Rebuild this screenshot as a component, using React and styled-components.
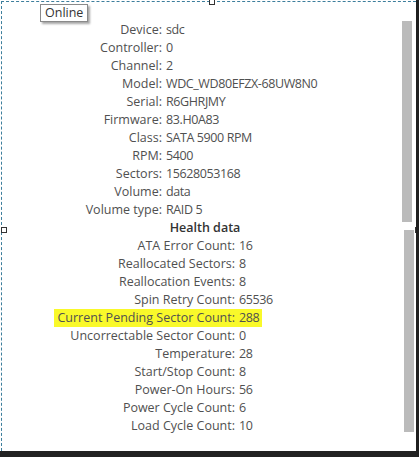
import React from "react";
import styled, { createGlobalStyle } from "styled-components";

const GlobalStyle = createGlobalStyle`
  html, body {
    margin: 0;
    padding: 0;
    background: #ffffff;
  }
  body {
    font-family: "Open Sans", "Noto Sans", sans-serif;
  }
`;

const device = [
  ["Device", "sdc"],
  ["Controller", "0"],
  ["Channel", "2"],
  ["Model", "WDC_WD80EFZX-68UW8N0"],
  ["Serial", "R6GHRJMY"],
  ["Firmware", "83.H0A83"],
  ["Class", "SATA 5900 RPM"],
  ["RPM", "5400"],
  ["Sectors", "15628053168"],
  ["Volume", "data"],
  ["Volume type", "RAID 5"],
];

const health = [
  ["ATA Error Count", "16"],
  ["Reallocated Sectors", "8"],
  ["Reallocation Events", "8"],
  ["Spin Retry Count", "65536"],
  ["Current Pending Sector Count", "288", true],
  ["Uncorrectable Sector Count", "0"],
  ["Temperature", "28"],
  ["Start/Stop Count", "8"],
  ["Power-On Hours", "56"],
  ["Power Cycle Count", "6"],
  ["Load Cycle Count", "10"],
];

export default function App() {
  return (
    <>
      <GlobalStyle />
      <Window>
        <Canvas>
          <Content>
            <Table $labelWidth={164}>
              {device.map(([k, v]) => (
                <Row key={k} label={k} value={v} />
              ))}
            </Table>
            <Heading>Health data</Heading>
            <Table $labelWidth={237}>
              {health.map(([k, v, hl]) => (
                <Row key={k} label={k} value={v} highlight={hl} />
              ))}
            </Table>
          </Content>
          <Scrollbar>
            <Thumb $shift={0} $height={201} />
            <Thumb $shift={2} $height={202} $gap={8} />
          </Scrollbar>
          <Tooltip>Online</Tooltip>
          <Handle $x={-1} $y={225} />
          <Handle $x={413} $y={225} />
          <Handle $x={207} $y={-3} />
        </Canvas>
      </Window>
    </>
  );
}

const Row = ({ label, value, highlight }) => (
  <>
    <Label>
      <Mark $hl={highlight} $side="label">
        {label}:
      </Mark>
    </Label>
    <Value>
      <Mark $hl={highlight} $side="value" $tight>
        {value}
      </Mark>
    </Value>
  </>
);

const Window = styled.div`
  width: 419px;
  height: 457px;
  box-sizing: border-box;
  padding: 1px 0 0 1px;
  border-right: 3px solid #1f1f1f;
  border-bottom: 6px solid #222222;
  background: #ffffff;
  overflow: hidden;
`;

const Canvas = styled.div`
  position: relative;
  display: flex;
  height: 100%;
  box-sizing: border-box;
  border-left: 1px dashed #3d7e9c;
  border-top: 1px dashed #3d7e9c;
`;

const Content = styled.div`
  flex: 1;
  padding-top: 19px;
  color: #505050;
  font-size: 12.5px;
  line-height: 18px;
`;

const Table = styled.div`
  display: grid;
  grid-template-columns: ${({ $labelWidth }) => `${$labelWidth}px`} 1fr;
`;

const Label = styled.div`
  text-align: right;
  white-space: nowrap;
`;

const Value = styled.div`
  white-space: nowrap;
`;

const Mark = styled.span`
  display: inline-block;
  height: 18px;
  padding: ${({ $side }) => ($side === "label" ? "0 4px 0 3px" : "0 3px 0 0")};
  letter-spacing: ${({ $tight }) => ($tight ? "-0.4px" : "0")};
  background: ${({ $hl }) => ($hl ? "#f9f92a" : "transparent")};
`;

const Heading = styled.div`
  text-align: center;
  font-weight: 600;
  color: #333333;
  padding-left: 6px;
`;

const Scrollbar = styled.div`
  width: 14px;
  padding-top: 19px;
  display: flex;
  flex-direction: column;
`;

const Thumb = styled.div`
  width: 10px;
  height: ${({ $height }) => `${$height}px`};
  margin-left: ${({ $shift }) => `${$shift}px`};
  margin-top: ${({ $gap = 0 }) => `${$gap}px`};
  background: #bbbbbb;
`;

const Tooltip = styled.div`
  position: absolute;
  left: 38px;
  top: 2px;
  padding: 0 4px;
  height: 18px;
  line-height: 16px;
  box-sizing: border-box;
  border: 1px solid #8a8a8a;
  background: #ffffff;
  color: #333333;
  font-size: 12.5px;
  box-shadow: 2px 2px 2px rgba(0, 0, 0, 0.35);
`;

const Handle = styled.div`
  position: absolute;
  left: ${({ $x }) => `${$x}px`};
  top: ${({ $y }) => `${$y}px`};
  width: 4px;
  height: 4px;
  border: 1px solid #333333;
  background: #ffffff;
`;
